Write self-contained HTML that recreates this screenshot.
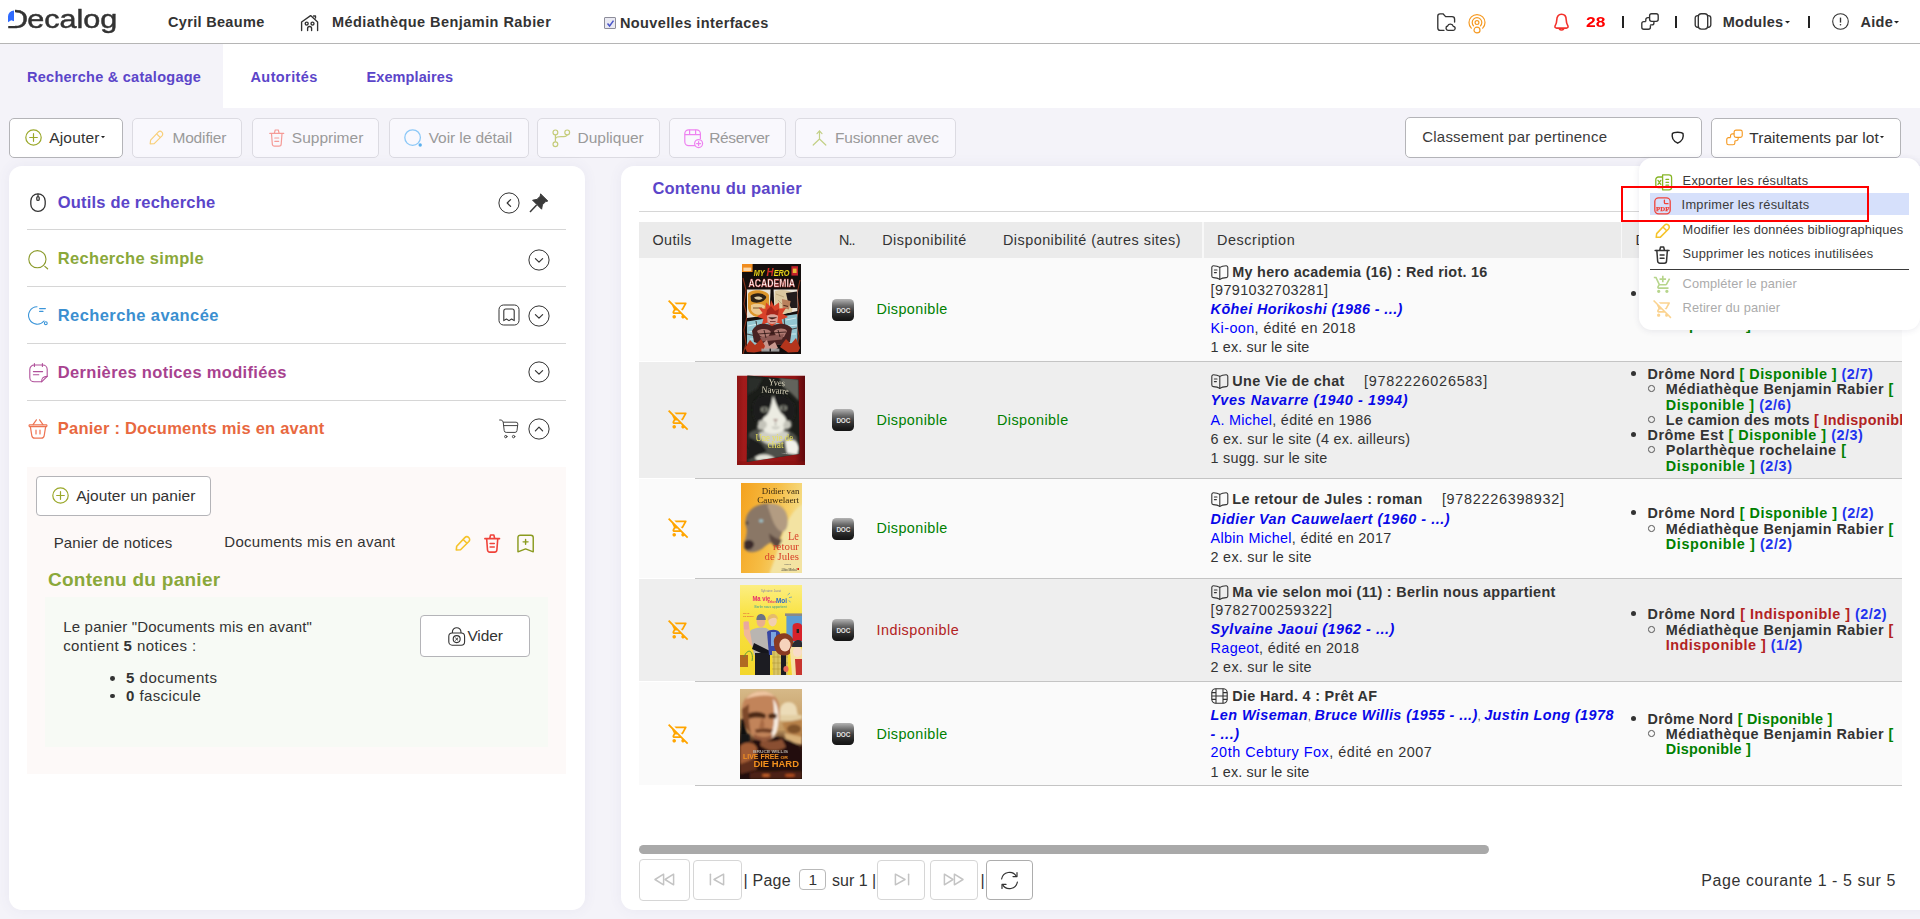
<!DOCTYPE html>
<html lang="fr">
<head>
<meta charset="utf-8">
<title>Decalog</title>
<style>
*{box-sizing:border-box;margin:0;padding:0}
html,body{width:1920px;height:919px;overflow:hidden}
body{font-family:"Liberation Sans",sans-serif;font-size:15px;color:#333;background:#f4f3f9;position:relative}
.abs{position:absolute}
.t{position:absolute;white-space:nowrap;line-height:1}
svg{display:block;overflow:visible}
/* header */
#hdr{left:0;top:0;width:1920px;height:44px;background:#fff;border-bottom:1px solid #b5b5b5}
#tabs{left:0;top:44px;width:1920px;height:64px;background:#fff}
#tab1{left:0;top:44px;width:223px;height:64px;background:#f4f3f9}
.btn{position:absolute;top:118px;height:39px;border:1px solid #b9b9b9;border-radius:4px;background:#fff}
.btn.dis{border-color:#d9d8de;background:#f8f7fc}
/* panels */
#left{left:9px;top:166px;width:576px;height:744px;background:#fff;border-radius:13px;box-shadow:0 0 14px rgba(80,80,140,.07)}
#right{left:621px;top:166px;width:1320px;height:744px;background:#fff;border-radius:13px;box-shadow:0 0 14px rgba(80,80,140,.07)}
.hr{position:absolute;height:1px;background:#d4d4d4}
</style>
</head>
<body>
<div id="hdr" class="abs"></div>
<div id="tabs" class="abs"></div>
<div id="tab1" class="abs"></div>
<!--HEADER-->
<span class="t" style="left:6.2px;top:7.0px;font-size:25.5px;color:#333;transform:scaleX(1.2);transform-origin:0 50%;-webkit-text-stroke:.45px #333;"><span style="letter-spacing:-.8px">D</span>ecalog</span>
<div class="abs" style="left:6.0px;top:8.0px;width:8.6px;height:17.7px;background:#fff"></div>
<svg class="abs" style="left:7.0px;top:9.0px;" width="22" height="22" viewBox="0 0 22 22"><path d="M7 1.4 A6 6 0 0 0 1 7.4 V13.2 L4.2 11.2 L7 12.2 Z" fill="#2f6bff"/></svg>
<span class="t" style="left:168.0px;top:15.0px;font-size:14.5px;letter-spacing:0.32px;font-weight:bold;color:#333;">Cyril Beaume</span>
<svg class="abs" style="left:300.0px;top:14.0px;" width="19" height="17" viewBox="0 0 19 17"><g fill="none" stroke="#333" stroke-width="1.35" stroke-linejoin="round" stroke-linecap="round"><path d="M1.6 16.5 V8 L10.6 1.6 L17.6 8 V16.5"/><path d="M13.5 2 h2 v2"/><circle cx="6.7" cy="9.6" r="1.5"/><circle cx="12.5" cy="9.6" r="1.5"/><path d="M7.6 16.5 v-2 a2 2 0 0 1 4 0 v2"/></g></svg>
<span class="t" style="left:332.0px;top:15.0px;font-size:14.5px;letter-spacing:0.45px;font-weight:bold;color:#333;">Médiathèque Benjamin Rabier</span>
<div class="abs" style="left:604.2px;top:17.3px;width:11.7px;height:11.5px;background:#e9e9f2;border:1px solid #8d8d9a;border-radius:1px"></div>
<svg class="abs" style="left:605.5px;top:18.5px;" width="9" height="9" viewBox="0 0 9 9"><path d="M1.5 4.5 L3.6 7 L7.5 1.6" fill="none" stroke="#4a55c9" stroke-width="1.5"/></svg>
<span class="t" style="left:620.0px;top:16.0px;font-size:14.5px;letter-spacing:0.38px;font-weight:bold;color:#333;">Nouvelles interfaces</span>
<svg class="abs" style="left:1436.5px;top:13.0px;" width="19" height="18" viewBox="0 0 19 18"><g fill="none" stroke="#333" stroke-width="1.35" stroke-linecap="round" stroke-linejoin="round"><path d="M7 17.3 H3.2 A2.4 2.4 0 0 1 .8 14.9 V3 A2.2 2.2 0 0 1 3 .8 H6 L8.6 3.6 H15 A2.6 2.6 0 0 1 17.6 6.2 V9"/><path d="M11 17.3 a2.2 2.2 0 0 1 -.4 -4.3 a3 3 0 0 1 5.7 .3 a2 2 0 0 1 -.3 4 Z"/></g></svg>
<svg class="abs" style="left:1467.5px;top:13.5px;" width="18" height="20" viewBox="0 0 18 20"><g fill="none" stroke="#f59a23" stroke-width="1.2" stroke-linecap="round"><path d="M3.3 14.2 A8 8 0 1 1 14.7 14.2"/><path d="M5.6 11.9 A4.8 4.8 0 1 1 12.4 11.9"/><circle cx="9" cy="8.6" r="1.9"/><path d="M6 16.2 a3 3 0 0 1 6 0 a3 2.6 0 0 1 -6 0 Z"/></g></svg>
<svg class="abs" style="left:1554.0px;top:12.5px;" width="15" height="18.5" viewBox="0 0 15 18.5"><g fill="none" stroke="#f3322c" stroke-width="1.6" stroke-linecap="round" stroke-linejoin="round"><path d="M7.5 1.2 C4.2 1.2 2.8 4 2.8 6.8 C2.8 10 1.9 11.6 1 13.2 C.7 14.3 1.5 15.1 2.6 15.1 H12.4 C13.5 15.1 14.3 14.3 14 13.2 C13.1 11.6 12.2 10 12.2 6.8 C12.2 4 10.8 1.2 7.5 1.2 Z"/><path d="M5.4 16 a2.4 2 0 0 0 4.2 0"/></g></svg>
<span class="t" style="left:1585.9px;top:15.0px;font-size:14.5px;font-weight:bold;color:#f00;transform:scaleX(1.2);transform-origin:0 50%;">28</span>
<div class="abs" style="left:1622.1px;top:15.5px;width:1.6px;height:12.5px;background:#222"></div>
<div class="abs" style="left:1675.3px;top:15.5px;width:1.6px;height:12.5px;background:#222"></div>
<div class="abs" style="left:1808.4px;top:15.5px;width:1.6px;height:12.5px;background:#222"></div>
<svg class="abs" style="left:1641.0px;top:13.0px;" width="18" height="17" viewBox="0 0 18 17"><g fill="none" stroke="#333" stroke-width="1.35" stroke-linejoin="round"><rect x="8.6" y=".7" width="8.6" height="7.6" rx="2"/><path d="M8.6 4.6 H6.8 a2 2 0 0 0 -2 2 V8.4 M12.9 8.3 v1.6 a2 2 0 0 1 -2 2 H9.2"/><path d="M4.8 8.6 H2.8 a2 2 0 0 0 -2 2 v3.6 a2 2 0 0 0 2 2 h4.6 a2 2 0 0 0 2 -2 v-2"/></g></svg>
<svg class="abs" style="left:1694.0px;top:13.0px;" width="18" height="17" viewBox="0 0 18 17"><g fill="none" stroke="#333" stroke-width="1.35"><rect x="4.3" y=".7" width="9.4" height="15.4" rx="3"/><path d="M4.3 2.6 H3.6 a2.4 2.4 0 0 0 -2.4 2.4 v6.8 a2.4 2.4 0 0 0 2.4 2.4 h.7 M13.7 2.6 h.7 a2.4 2.4 0 0 1 2.4 2.4 v6.8 a2.4 2.4 0 0 1 -2.4 2.4 h-.7"/></g></svg>
<span class="t" style="left:1722.7px;top:15.0px;font-size:14.5px;letter-spacing:0.26px;font-weight:bold;color:#333;">Modules</span>
<svg class="abs" style="left:1785.0px;top:20.6px;" width="5" height="3" viewBox="0 0 5 3"><path d="M0 0 H5 L2.5 2.6 Z" fill="#222"/></svg>
<svg class="abs" style="left:1832.0px;top:13.0px;" width="17" height="17" viewBox="0 0 17 17"><circle cx="8.5" cy="8.5" r="7.8" fill="none" stroke="#333" stroke-width="1.1"/><path d="M8.5 4.6 V9.6" stroke="#333" stroke-width="1.35"/><circle cx="8.5" cy="11.8" r=".8" fill="#333"/></svg>
<span class="t" style="left:1860.5px;top:15.0px;font-size:14.5px;letter-spacing:0.28px;font-weight:bold;color:#333;">Aide</span>
<svg class="abs" style="left:1894.0px;top:20.6px;" width="5" height="3" viewBox="0 0 5 3"><path d="M0 0 H5 L2.5 2.6 Z" fill="#222"/></svg>
<span class="t" style="left:27.0px;top:70.0px;font-size:14.5px;letter-spacing:0.26px;font-weight:bold;color:#5b45c9;">Recherche &amp; catalogage</span>
<span class="t" style="left:250.5px;top:70.0px;font-size:14.5px;letter-spacing:0.4px;font-weight:bold;color:#5b45c9;">Autorités</span>
<span class="t" style="left:366.5px;top:70.0px;font-size:14.5px;letter-spacing:0.1px;font-weight:bold;color:#5b45c9;">Exemplaires</span>

<!--TOOLBAR-->
<div class="abs" style="left:9.2px;top:118.0px;width:114.3px;height:40.0px;border:1px solid #b4b4b8;border-radius:5px;background:#fff;"></div>
<svg class="abs" style="left:24.8px;top:129.3px;" width="17" height="17" viewBox="0 0 17 17"><circle cx="8.5" cy="8.5" r="7.7" fill="none" stroke="#9aa82a" stroke-width="1.2"/><path d="M8.5 4.7 V12.3 M4.7 8.5 H12.3" stroke="#9aa82a" stroke-width="1.2" stroke-linecap="round"/></svg>
<span class="t" style="left:49.2px;top:130.0px;font-size:15.5px;letter-spacing:0.18px;color:#333;">Ajouter</span>
<svg class="abs" style="left:101.2px;top:136.3px;" width="4" height="2.4" viewBox="0 0 5 3"><path d="M0 0 H5 L2.5 2.8 Z" fill="#222"/></svg>
<div class="abs" style="left:132.0px;top:118.0px;width:110.3px;height:40.0px;border:1px solid #dcdbe2;border-radius:5px;background:#f9f8fd;"></div>
<svg class="abs" style="left:149.3px;top:130.0px;" width="15" height="15" viewBox="0 0 15 15"><g fill="none" stroke="#f8cf7a" stroke-width="1.2" stroke-linejoin="round"><path d="M1.2 13.8 L1.6 10.2 L9.2 2.2 A2.6 2.6 0 0 1 13 5.8 L5.2 13.6 Z"/><path d="M7.6 3.9 L11.3 7.5"/></g></svg>
<span class="t" style="left:172.4px;top:130.0px;font-size:15.5px;letter-spacing:-0.15px;color:#9a9a9a;">Modifier</span>
<div class="abs" style="left:252.0px;top:118.0px;width:127.3px;height:40.0px;border:1px solid #dcdbe2;border-radius:5px;background:#f9f8fd;"></div>
<svg class="abs" style="left:268.5px;top:128.5px;" width="15.5" height="18" viewBox="0 0 15.5 18"><g fill="none" stroke="#f59b97" stroke-width="1.2" stroke-linecap="round" stroke-linejoin="round"><path d="M.8 4.4 H14.7 M5.4 4.2 L6.2 1 H9.3 L10.1 4.2"/><path d="M2.5 4.6 L3.3 15 A2.2 2.2 0 0 0 5.5 17.2 H10 A2.2 2.2 0 0 0 12.2 15 L13 4.6"/><path d="M5.8 9 H9.7 M5.8 12.3 H9.7"/></g></svg>
<span class="t" style="left:291.8px;top:130.0px;font-size:15.5px;color:#9a9a9a;">Supprimer</span>
<div class="abs" style="left:389.0px;top:118.0px;width:139.5px;height:40.0px;border:1px solid #dcdbe2;border-radius:5px;background:#f9f8fd;"></div>
<svg class="abs" style="left:403.5px;top:128.5px;" width="19" height="19" viewBox="0 0 19 19"><circle cx="8.6" cy="8.6" r="7.8" fill="none" stroke="#8cc8f7" stroke-width="1.3"/><circle cx="16.2" cy="16" r="1.7" fill="#5ab0ee"/></svg>
<span class="t" style="left:428.7px;top:130.0px;font-size:15.5px;letter-spacing:-0.08px;color:#9a9a9a;">Voir le détail</span>
<div class="abs" style="left:537.2px;top:118.0px;width:122.6px;height:40.0px;border:1px solid #dcdbe2;border-radius:5px;background:#f9f8fd;"></div>
<svg class="abs" style="left:552.3px;top:128.6px;" width="19" height="19" viewBox="0 0 19 19"><g fill="none" stroke="#c5cc7a" stroke-width="1.2"><circle cx="3.4" cy="3.4" r="2.4"/><circle cx="3.4" cy="15.2" r="2.4"/><circle cx="15.2" cy="3.4" r="2.4"/><path d="M3.4 5.8 V12.8 M3.4 10.6 C3.4 7.8 6 7.6 9 7.6 C12.6 7.6 15.2 7.4 15.2 5.8"/></g></svg>
<span class="t" style="left:577.5px;top:130.0px;font-size:15.5px;letter-spacing:-0.01px;color:#9a9a9a;">Dupliquer</span>
<div class="abs" style="left:669.2px;top:118.0px;width:116.4px;height:40.0px;border:1px solid #dcdbe2;border-radius:5px;background:#f9f8fd;"></div>
<svg class="abs" style="left:683.6px;top:128.8px;" width="19.5" height="19.5" viewBox="0 0 19.5 19.5"><g fill="none" stroke="#ee82f0" stroke-width="1.2" stroke-linejoin="round"><path d="M12 16.6 H4.6 A3.8 3.8 0 0 1 .8 12.8 V4.6 A3.8 3.8 0 0 1 4.6 .8 H12.6 A3.8 3.8 0 0 1 16.4 4.6 V10"/><path d="M.8 5.6 H16.4 M5.6 .8 V5.6 M11.6 .8 V5.6"/><circle cx="14.6" cy="14.6" r="4" fill="#f9f8fd"/><path d="M14.6 12.6 V16.6 M12.6 14.6 H16.6" stroke-linecap="round"/></g></svg>
<span class="t" style="left:709.2px;top:130.0px;font-size:15.5px;letter-spacing:-0.34px;color:#9a9a9a;">Réserver</span>
<div class="abs" style="left:795.2px;top:118.0px;width:160.4px;height:40.0px;border:1px solid #dcdbe2;border-radius:5px;background:#f9f8fd;"></div>
<svg class="abs" style="left:811.8px;top:129.5px;" width="15" height="16" viewBox="0 0 15 16"><g fill="none" stroke="#c3d086" stroke-width="1.2" stroke-linecap="round" stroke-linejoin="round"><path d="M7.5 1.2 V9 L1.2 15 M7.5 9 L13.8 15"/><path d="M5 3.6 L7.5 1 L10 3.6"/></g></svg>
<span class="t" style="left:835.0px;top:130.0px;font-size:15.5px;letter-spacing:-0.16px;color:#9a9a9a;">Fusionner avec</span>
<div class="abs" style="left:1405.0px;top:117.0px;width:297.0px;height:41.0px;border:1px solid #b4b4b8;border-radius:5px;background:#fff"></div>
<span class="t" style="left:1422.2px;top:129.0px;font-size:15px;letter-spacing:0.23px;color:#3a3a3a;">Classement par pertinence</span>
<svg class="abs" style="left:1670.8px;top:131.3px;" width="13.4" height="13" viewBox="0 0 13.4 13"><path d="M6.7 1.2 C4.4 1.2 2.2 1.5 1.4 2.5 C.5 6 2.2 10 6.7 12.2 C11.2 10 12.9 6 12 2.5 C11.2 1.5 9 1.2 6.7 1.2 Z" fill="none" stroke="#222" stroke-width="1.4" stroke-linejoin="round"/></svg>
<div class="abs" style="left:1710.8px;top:118.0px;width:190.0px;height:40.0px;border:1px solid #b4b4b8;border-radius:5px;background:#fff;"></div>
<svg class="abs" style="left:1725.6px;top:128.6px;" width="17" height="17" viewBox="0 0 18 17"><g fill="none" stroke="#f59a23" stroke-width="1.2" stroke-linejoin="round"><rect x="8.6" y=".7" width="8.6" height="7.6" rx="2"/><path d="M8.6 4.6 H6.8 a2 2 0 0 0 -2 2 V8.4 M12.9 8.3 v1.6 a2 2 0 0 1 -2 2 H9.2"/><path d="M4.8 8.6 H2.8 a2 2 0 0 0 -2 2 v3.6 a2 2 0 0 0 2 2 h4.6 a2 2 0 0 0 2 -2 v-2"/></g></svg>
<span class="t" style="left:1749.3px;top:130.0px;font-size:15.5px;letter-spacing:0.05px;color:#333;">Traitements par lot</span>
<svg class="abs" style="left:1880.3px;top:136.3px;" width="4" height="2.4" viewBox="0 0 5 3"><path d="M0 0 H5 L2.5 2.8 Z" fill="#222"/></svg>

<div id="left" class="abs"></div>
<div id="right" class="abs"></div>
<!--LEFT-->
<div class="abs" style="left:27.0px;top:229.0px;width:539.0px;height:1.0px;background:#d6d6d6"></div>
<div class="abs" style="left:27.0px;top:286.0px;width:539.0px;height:1.0px;background:#d6d6d6"></div>
<div class="abs" style="left:27.0px;top:343.0px;width:539.0px;height:1.0px;background:#d6d6d6"></div>
<div class="abs" style="left:27.0px;top:400.0px;width:539.0px;height:1.0px;background:#d6d6d6"></div>
<svg class="abs" style="left:30.0px;top:192.6px;" width="16" height="19.2" viewBox="0 0 16 19.2"><g fill="none" stroke="#333" stroke-width="1.3"><rect x=".8" y=".8" width="14.4" height="17.6" rx="7.2"/><rect x="6.8" y="3.6" width="2.4" height="3.8" rx="1.2"/><path d="M8 .8 V3.6"/></g></svg>
<span class="t" style="left:57.8px;top:194.0px;font-size:16.5px;letter-spacing:0.18px;font-weight:bold;color:#5b45c9;">Outils de recherche</span>
<svg class="abs" style="left:497.5px;top:192.0px;" width="22" height="22" viewBox="-11 -11 22 22"><circle r="10.1" fill="none" stroke="#333" stroke-width="1"/><path d="M1.6 -3.4 L-1.8 0 L1.6 3.4" fill="none" stroke="#333" stroke-width="1.2" stroke-linecap="round" stroke-linejoin="round"/></svg>
<svg class="abs" style="left:528.5px;top:192.6px;" width="19.5" height="20" viewBox="0 0 19.5 20"><g fill="#3a3a3a" stroke="#3a3a3a" stroke-linejoin="round"><path d="M11.6 .9 L18.8 8 L16.6 8.6 L13.4 11.8 L12.6 16.2 L3.6 7.2 L8 6.4 L11.2 3.2 Z" stroke-width="1"/><path d="M7.6 12 L1 19" stroke-width="1.5" fill="none"/></g></svg>
<svg class="abs" style="left:28.0px;top:249.5px;" width="21" height="20" viewBox="0 0 21 20"><circle cx="9.4" cy="9.2" r="8.6" fill="none" stroke="#8a9a2a" stroke-width="1.1"/><path d="M16.8 16.4 L19.6 18.8" stroke="#8a9a2a" stroke-width="1.2" stroke-linecap="round"/></svg>
<span class="t" style="left:57.8px;top:250.0px;font-size:16.5px;letter-spacing:0.31px;font-weight:bold;color:#8aa83a;">Recherche simple</span>
<svg class="abs" style="left:528.2px;top:248.8px;" width="22" height="22" viewBox="-11 -11 22 22"><circle r="10.1" fill="none" stroke="#333" stroke-width="1"/><path d="M-3.6 -1.4 L0 2.2 L3.6 -1.4" fill="none" stroke="#333" stroke-width="1.2" stroke-linecap="round" stroke-linejoin="round"/></svg>
<svg class="abs" style="left:28.0px;top:306.0px;" width="21" height="20" viewBox="0 0 21 20"><g fill="none" stroke="#3b95d9" stroke-width="1.1" stroke-linecap="round"><path d="M9 .8 A8.7 8.7 0 1 0 16 15"/><path d="M11.6 2.6 H17.4 M11.6 5.4 H15"/><circle cx="17.8" cy="17.2" r="1.4"/></g></svg>
<span class="t" style="left:57.8px;top:307.0px;font-size:16.5px;letter-spacing:0.41px;font-weight:bold;color:#3b8fd0;">Recherche avancée</span>
<svg class="abs" style="left:497.5px;top:304.0px;" width="22" height="22" viewBox="-11 -11 22 22"><rect x="-10" y="-10" width="20" height="20" rx="4.5" fill="none" stroke="#333" stroke-width="1"/><path d="M-5.2 5.6 V-4 A2 2 0 0 1 -3.2 -6 H3.2 A2 2 0 0 1 5.2 -4 V5.6 L2.6 4 L0 5.6 L-2.6 4 Z" fill="none" stroke="#333" stroke-width="1.1" stroke-linejoin="round"/></svg>
<svg class="abs" style="left:528.2px;top:304.5px;" width="22" height="22" viewBox="-11 -11 22 22"><circle r="10.1" fill="none" stroke="#333" stroke-width="1"/><path d="M-3.6 -1.4 L0 2.2 L3.6 -1.4" fill="none" stroke="#333" stroke-width="1.2" stroke-linecap="round" stroke-linejoin="round"/></svg>
<svg class="abs" style="left:28.5px;top:362.6px;" width="19" height="19.6" viewBox="0 0 19 19.6"><g fill="none" stroke="#b0509a" stroke-width="1.1" stroke-linecap="round" stroke-linejoin="round"><path d="M12.6 18.8 H5.2 A4.4 4.4 0 0 1 .8 14.4 V6.4 A4.4 4.4 0 0 1 5.2 2 H13.8 A4.4 4.4 0 0 1 18.2 6.4 V13.4 Z"/><path d="M12.6 18.8 C12.6 15.6 13.4 13.6 18.2 13.4"/><path d="M5.4 .6 V3.4 M13.4 .6 V3.4 M4.4 8.6 H13.6 M4.4 11.8 H9.8"/></g></svg>
<span class="t" style="left:57.8px;top:364.0px;font-size:16.5px;letter-spacing:0.33px;font-weight:bold;color:#a8428f;">Dernières notices modifiées</span>
<svg class="abs" style="left:528.2px;top:361.1px;" width="22" height="22" viewBox="-11 -11 22 22"><circle r="10.1" fill="none" stroke="#333" stroke-width="1"/><path d="M-3.6 -1.4 L0 2.2 L3.6 -1.4" fill="none" stroke="#333" stroke-width="1.2" stroke-linecap="round" stroke-linejoin="round"/></svg>
<svg class="abs" style="left:28.0px;top:419.0px;" width="20" height="20" viewBox="0 0 20 20"><g fill="none" stroke="#ee7452" stroke-width="1.2" stroke-linecap="round" stroke-linejoin="round"><path d="M1.6 7.6 H18.4 A1 1 0 0 0 18.4 5.8 H1.6 A1 1 0 0 0 1.6 7.6 Z"/><path d="M2.4 7.8 L3.8 16.6 A3 3 0 0 0 6.8 19.2 H13.2 A3 3 0 0 0 16.2 16.6 L17.6 7.8"/><path d="M5 5.6 L8.4 .8 M15 5.6 L11.6 .8 M8 11.2 V15 M12 11.2 V15"/></g></svg>
<span class="t" style="left:57.8px;top:420.0px;font-size:16.5px;letter-spacing:0.23px;font-weight:bold;color:#e8683f;">Panier : Documents mis en avant</span>
<svg class="abs" style="left:498.6px;top:419.0px;" width="20" height="20" viewBox="0 0 20 20"><g fill="none" stroke="#444" stroke-width="1" stroke-linecap="round" stroke-linejoin="round"><path d="M.6 1 H2.6 L4.2 3 L5.2 11.6 A2 2 0 0 0 7.2 13.4 H16 A2 2 0 0 0 18 11.6 L18.8 5.2 A1.8 1.8 0 0 0 17 3.2 H4.4"/><path d="M4.8 6.6 H18.6"/><circle cx="6.8" cy="17.6" r="1.2"/><circle cx="14.6" cy="17.6" r="1.2"/></g></svg>
<svg class="abs" style="left:528.2px;top:418.1px;" width="22" height="22" viewBox="-11 -11 22 22"><circle r="10.1" fill="none" stroke="#333" stroke-width="1"/><path d="M-3.6 1.8 L0 -1.8 L3.6 1.8" fill="none" stroke="#333" stroke-width="1.2" stroke-linecap="round" stroke-linejoin="round"/></svg>
<div class="abs" style="left:27.0px;top:467.0px;width:539.0px;height:307.0px;background:#fdf9f8"></div>
<div class="abs" style="left:36.2px;top:476.3px;width:174.5px;height:39.3px;border:1px solid #b4b4b8;border-radius:4px;background:#fff"></div>
<svg class="abs" style="left:52.0px;top:487.3px;" width="17" height="17" viewBox="0 0 17 17"><circle cx="8.5" cy="8.5" r="7.7" fill="none" stroke="#9aa82a" stroke-width="1.2"/><path d="M8.5 4.7 V12.3 M4.7 8.5 H12.3" stroke="#9aa82a" stroke-width="1.2" stroke-linecap="round"/></svg>
<span class="t" style="left:76.2px;top:488.0px;font-size:15.5px;letter-spacing:0.07px;color:#333;">Ajouter un panier</span>
<span class="t" style="left:53.7px;top:535.0px;font-size:15px;letter-spacing:0.16px;color:#333;">Panier de notices</span>
<span class="t" style="left:224.3px;top:534.0px;font-size:15px;letter-spacing:0.27px;color:#333;">Documents mis en avant</span>
<svg class="abs" style="left:455.4px;top:535.0px;" width="16" height="16.6" viewBox="0 0 15 15"><g fill="none" stroke="#f5c32a" stroke-width="1.5" stroke-linejoin="round"><path d="M1.2 13.8 L1.6 10.2 L9.2 2.2 A2.6 2.6 0 0 1 13 5.8 L5.2 13.6 Z"/><path d="M7.6 3.9 L11.3 7.5"/></g></svg>
<svg class="abs" style="left:484.4px;top:534.0px;" width="16.4" height="19" viewBox="0 0 15.5 18"><g fill="none" stroke="#f0433a" stroke-width="1.5" stroke-linecap="round" stroke-linejoin="round"><path d="M.8 4.4 H14.7 M5.4 4.2 L6.2 1 H9.3 L10.1 4.2"/><path d="M2.5 4.6 L3.3 15 A2.2 2.2 0 0 0 5.5 17.2 H10 A2.2 2.2 0 0 0 12.2 15 L13 4.6"/><path d="M5.8 9 H9.7 M5.8 12.3 H9.7"/></g></svg>
<svg class="abs" style="left:517.0px;top:533.6px;" width="17.2" height="19.2" viewBox="0 0 18 19.6"><g fill="none" stroke="#8a9a1e" stroke-width="1.5" stroke-linecap="round" stroke-linejoin="round"><path d="M1 18.4 V3.4 A2.4 2.4 0 0 1 3.4 1 H14.6 A2.4 2.4 0 0 1 17 3.4 V18.4 L9 15.4 Z"/><path d="M9 5.4 V10.6 M6.4 8 H11.6"/></g></svg>
<span class="t" style="left:48.0px;top:570.0px;font-size:19px;letter-spacing:0.27px;font-weight:bold;color:#8aa83a;">Contenu du panier</span>
<div class="abs" style="left:45.0px;top:597.0px;width:503.0px;height:149.5px;background:#f7faf5"></div>
<span class="t" style="left:63.2px;top:619.0px;font-size:15px;letter-spacing:0.19px;color:#333;">Le panier "Documents mis en avant"</span>
<span class="t" style="left:63.2px;top:638.0px;font-size:15px;letter-spacing:0.41px;color:#333;">contient <b>5</b> notices :</span>
<div class="abs" style="left:420.2px;top:615.3px;width:109.8px;height:41.6px;border:1px solid #b4b4b8;border-radius:4px;background:#fff"></div>
<svg class="abs" style="left:447.8px;top:626.6px;" width="17.4" height="19" viewBox="0 0 17.4 19"><g fill="none" stroke="#333" stroke-width="1.1" stroke-linejoin="round"><path d="M4.4 6 V5 A4.3 4.3 0 0 1 13 5 V6"/><rect x=".8" y="6" width="15.8" height="12.2" rx="3.4"/><circle cx="8.7" cy="12.1" r="3.5"/><path d="M7.3 10.7 L10.1 13.5 M10.1 10.7 L7.3 13.5" stroke-width="1"/></g></svg>
<span class="t" style="left:467.4px;top:628.0px;font-size:15.5px;letter-spacing:-0.09px;color:#333;">Vider</span>
<div class="abs" style="left:110.2px;top:675.8px;width:4.8px;height:4.8px;background:#333;border-radius:50%"></div>
<div class="abs" style="left:110.2px;top:693.6px;width:4.8px;height:4.8px;background:#333;border-radius:50%"></div>
<span class="t" style="left:126.1px;top:670.0px;font-size:15px;letter-spacing:0.49px;color:#333;"><b>5</b> documents</span>
<span class="t" style="left:126.1px;top:688.0px;font-size:15px;letter-spacing:0.39px;color:#333;"><b>0</b> fascicule</span>

<!--RIGHT-->
<span class="t" style="left:652.4px;top:180.0px;font-size:16.5px;letter-spacing:0.22px;font-weight:bold;color:#5b45c9;">Contenu du panier</span>
<div class="abs" style="left:639.0px;top:211.0px;width:1290.0px;height:1.0px;background:#d6d6d6"></div>
<div class="abs" style="left:0;top:0;width:1902px;height:800px;overflow:hidden">
<div class="abs" style="left:639.0px;top:222.3px;width:1263.0px;height:35.6px;background:#ebebeb"></div>
<div class="abs" style="left:1202.0px;top:222.3px;width:1.6px;height:35.6px;background:#f8f8f8"></div>
<div class="abs" style="left:1620.6px;top:222.3px;width:1.6px;height:35.6px;background:#f8f8f8"></div>
<span class="t" style="left:652.4px;top:233.0px;font-size:14.4px;letter-spacing:0.4px;color:#333;">Outils</span>
<span class="t" style="left:731.1px;top:233.0px;font-size:14.4px;letter-spacing:0.75px;color:#333;">Imagette</span>
<span class="t" style="left:839.0px;top:233.0px;font-size:14.4px;letter-spacing:-0.96px;color:#333;">N..</span>
<span class="t" style="left:882.2px;top:233.0px;font-size:14.4px;letter-spacing:0.54px;color:#333;">Disponibilité</span>
<span class="t" style="left:1003.0px;top:233.0px;font-size:14.4px;letter-spacing:0.47px;color:#333;">Disponibilité (autres sites)</span>
<span class="t" style="left:1217.0px;top:233.0px;font-size:14.4px;letter-spacing:0.57px;color:#333;">Description</span>
<span class="t" style="left:1635.4px;top:233.0px;font-size:14.4px;letter-spacing:0.9px;color:#333;">Disponibilité (réseau)</span>
<div class="abs" style="left:639.0px;top:257.9px;width:1263.0px;height:103.1px;background:#fafafa"></div>
<div class="abs" style="left:695.0px;top:361.0px;width:1207.0px;height:1.0px;background:#c4c4c4"></div>
<div class="abs" style="left:639.0px;top:362.0px;width:1263.0px;height:116.0px;background:#eee"></div>
<div class="abs" style="left:695.0px;top:478.0px;width:1207.0px;height:1.0px;background:#c4c4c4"></div>
<div class="abs" style="left:639.0px;top:479.0px;width:1263.0px;height:99.0px;background:#fafafa"></div>
<div class="abs" style="left:695.0px;top:578.0px;width:1207.0px;height:1.0px;background:#c4c4c4"></div>
<div class="abs" style="left:639.0px;top:579.0px;width:1263.0px;height:102.3px;background:#eee"></div>
<div class="abs" style="left:695.0px;top:681.3px;width:1207.0px;height:1.0px;background:#c4c4c4"></div>
<div class="abs" style="left:639.0px;top:682.3px;width:1263.0px;height:102.7px;background:#fafafa"></div>
<div class="abs" style="left:695.0px;top:785.0px;width:1207.0px;height:1.0px;background:#c4c4c4"></div>
<svg class="abs" style="left:668.0px;top:298.6px;fill:#ffa500" width="21.3" height="21.3" viewBox="0 0 24 24"><path d="M1.41 1.13L0 2.54l4.39 4.39 2.21 4.66-1.35 2.45c-.16.28-.25.61-.25.96 0 1.1.9 2 2 2h7.46l1.38 1.38c-.5.36-.83.95-.83 1.62 0 1.1.89 2 1.99 2 .67 0 1.26-.33 1.62-.84L21.46 24l1.41-1.41L1.41 1.13zM7 15l1.1-2h2.36l2 2H7zM20 4H7.12l2 2h9.19l-2.76 5h-1.44l1.94 1.94c.54-.14.99-.49 1.25-.97l3.58-6.49C21.25 4.82 20.76 4 20 4zM7 18c-1.1 0-1.99.9-1.99 2S5.9 22 7 22s2-.9 2-2-.9-2-2-2z"/></svg>
<div class="abs" style="left:832.0px;top:298.8px;width:22.0px;height:22.0px;border-radius:4.5px;background:linear-gradient(#b4b4b4,#6a6a6a 30%,#3a3a3a 55%,#1c1c1c 85%,#141414)"></div>
<span class="t" style="left:836.4px;top:308.0px;font-size:6.4px;letter-spacing:-0.17px;font-weight:bold;color:#e4e4e4;">DOC</span>
<span class="t" style="left:876.4px;top:302.0px;font-size:14.4px;letter-spacing:0.41px;color:#008000;">Disponible</span>
<svg class="abs" style="left:668.0px;top:408.8px;fill:#ffa500" width="21.3" height="21.3" viewBox="0 0 24 24"><path d="M1.41 1.13L0 2.54l4.39 4.39 2.21 4.66-1.35 2.45c-.16.28-.25.61-.25.96 0 1.1.9 2 2 2h7.46l1.38 1.38c-.5.36-.83.95-.83 1.62 0 1.1.89 2 1.99 2 .67 0 1.26-.33 1.62-.84L21.46 24l1.41-1.41L1.41 1.13zM7 15l1.1-2h2.36l2 2H7zM20 4H7.12l2 2h9.19l-2.76 5h-1.44l1.94 1.94c.54-.14.99-.49 1.25-.97l3.58-6.49C21.25 4.82 20.76 4 20 4zM7 18c-1.1 0-1.99.9-1.99 2S5.9 22 7 22s2-.9 2-2-.9-2-2-2z"/></svg>
<div class="abs" style="left:832.0px;top:409.0px;width:22.0px;height:22.0px;border-radius:4.5px;background:linear-gradient(#b4b4b4,#6a6a6a 30%,#3a3a3a 55%,#1c1c1c 85%,#141414)"></div>
<span class="t" style="left:836.4px;top:418.0px;font-size:6.4px;letter-spacing:-0.17px;font-weight:bold;color:#e4e4e4;">DOC</span>
<span class="t" style="left:876.4px;top:413.0px;font-size:14.4px;letter-spacing:0.41px;color:#008000;">Disponible</span>
<svg class="abs" style="left:668.0px;top:517.4px;fill:#ffa500" width="21.3" height="21.3" viewBox="0 0 24 24"><path d="M1.41 1.13L0 2.54l4.39 4.39 2.21 4.66-1.35 2.45c-.16.28-.25.61-.25.96 0 1.1.9 2 2 2h7.46l1.38 1.38c-.5.36-.83.95-.83 1.62 0 1.1.89 2 1.99 2 .67 0 1.26-.33 1.62-.84L21.46 24l1.41-1.41L1.41 1.13zM7 15l1.1-2h2.36l2 2H7zM20 4H7.12l2 2h9.19l-2.76 5h-1.44l1.94 1.94c.54-.14.99-.49 1.25-.97l3.58-6.49C21.25 4.82 20.76 4 20 4zM7 18c-1.1 0-1.99.9-1.99 2S5.9 22 7 22s2-.9 2-2-.9-2-2-2z"/></svg>
<div class="abs" style="left:832.0px;top:517.6px;width:22.0px;height:22.0px;border-radius:4.5px;background:linear-gradient(#b4b4b4,#6a6a6a 30%,#3a3a3a 55%,#1c1c1c 85%,#141414)"></div>
<span class="t" style="left:836.4px;top:527.0px;font-size:6.4px;letter-spacing:-0.17px;font-weight:bold;color:#e4e4e4;">DOC</span>
<span class="t" style="left:876.4px;top:521.0px;font-size:14.4px;letter-spacing:0.41px;color:#008000;">Disponible</span>
<svg class="abs" style="left:668.0px;top:619.0px;fill:#ffa500" width="21.3" height="21.3" viewBox="0 0 24 24"><path d="M1.41 1.13L0 2.54l4.39 4.39 2.21 4.66-1.35 2.45c-.16.28-.25.61-.25.96 0 1.1.9 2 2 2h7.46l1.38 1.38c-.5.36-.83.95-.83 1.62 0 1.1.89 2 1.99 2 .67 0 1.26-.33 1.62-.84L21.46 24l1.41-1.41L1.41 1.13zM7 15l1.1-2h2.36l2 2H7zM20 4H7.12l2 2h9.19l-2.76 5h-1.44l1.94 1.94c.54-.14.99-.49 1.25-.97l3.58-6.49C21.25 4.82 20.76 4 20 4zM7 18c-1.1 0-1.99.9-1.99 2S5.9 22 7 22s2-.9 2-2-.9-2-2-2z"/></svg>
<div class="abs" style="left:832.0px;top:619.2px;width:22.0px;height:22.0px;border-radius:4.5px;background:linear-gradient(#b4b4b4,#6a6a6a 30%,#3a3a3a 55%,#1c1c1c 85%,#141414)"></div>
<span class="t" style="left:836.4px;top:628.0px;font-size:6.4px;letter-spacing:-0.17px;font-weight:bold;color:#e4e4e4;">DOC</span>
<span class="t" style="left:876.4px;top:623.0px;font-size:14.4px;letter-spacing:0.5px;color:#b22222;">Indisponible</span>
<svg class="abs" style="left:668.0px;top:722.6px;fill:#ffa500" width="21.3" height="21.3" viewBox="0 0 24 24"><path d="M1.41 1.13L0 2.54l4.39 4.39 2.21 4.66-1.35 2.45c-.16.28-.25.61-.25.96 0 1.1.9 2 2 2h7.46l1.38 1.38c-.5.36-.83.95-.83 1.62 0 1.1.89 2 1.99 2 .67 0 1.26-.33 1.62-.84L21.46 24l1.41-1.41L1.41 1.13zM7 15l1.1-2h2.36l2 2H7zM20 4H7.12l2 2h9.19l-2.76 5h-1.44l1.94 1.94c.54-.14.99-.49 1.25-.97l3.58-6.49C21.25 4.82 20.76 4 20 4zM7 18c-1.1 0-1.99.9-1.99 2S5.9 22 7 22s2-.9 2-2-.9-2-2-2z"/></svg>
<div class="abs" style="left:832.0px;top:722.8px;width:22.0px;height:22.0px;border-radius:4.5px;background:linear-gradient(#b4b4b4,#6a6a6a 30%,#3a3a3a 55%,#1c1c1c 85%,#141414)"></div>
<span class="t" style="left:836.4px;top:732.0px;font-size:6.4px;letter-spacing:-0.17px;font-weight:bold;color:#e4e4e4;">DOC</span>
<span class="t" style="left:876.4px;top:727.0px;font-size:14.4px;letter-spacing:0.41px;color:#008000;">Disponible</span>
<span class="t" style="left:997.0px;top:413.0px;font-size:14.4px;letter-spacing:0.44px;color:#008000;">Disponible</span>
<svg class="abs" style="left:742.0px;top:263.8px;" width="59" height="90" viewBox="0 0 59 90"><defs><filter id="b1" x="-20%" y="-20%" width="140%" height="140%"><feGaussianBlur stdDeviation=".55"/></filter><filter id="b1s"><feGaussianBlur stdDeviation=".25"/></filter><clipPath id="k1"><rect width="59" height="90"/></clipPath></defs><g clip-path="url(#k1)"><rect width="59" height="90" fill="#140e0d"/><g filter="url(#b1)"><path d="M1 14 L4 26 L2 40 L5 52 L2 66 L4 80 L1 90 M58 16 L55 30 L57 44 L54 58 L57 72 L55 88" stroke="#a2381a" stroke-width="1.1" fill="none" opacity=".8"/><path d="M5 25.6 H28.6 L27.4 51 L5 54 Z" fill="#e8e2d6"/><path d="M6 30 C8 25 24 25 27 31 L27 50 L20 53 C12 54 7 50 6 44 Z" fill="#dd962c"/><path d="M8.5 32 C12 28 22 28.6 24.4 33 C23 38.6 13 40.4 9 37 Z" fill="#2e2014"/><path d="M12 33.4 C15 32 19 32.4 20.6 34.4 C18 36 14 36.4 12 33.4 Z" fill="#d8c8a0"/><path d="M9 41 C13 39 20 39.4 23 42 L21 50 C16 52 11 50 9 46 Z" fill="#ecc890"/><path d="M11 44 H20" stroke="#5a3a1a" stroke-width=".8"/><path d="M31.6 25.6 H55.4 V47 L32.6 52 Z" fill="#ebe6da"/><path d="M33 27 C40 25 48 26 52 30 L50 48 L36 51 C33 44 32 34 33 27 Z" fill="#dcc9a0"/><path d="M44 29 L55 27.6 V44 L49 44 L46 38 Z" fill="#241c1c"/><path d="M40 35 L48.6 37 L47 45.6 L40.6 44 Z" fill="#b9805c"/><path d="M41.4 41.4 L46 42.4" stroke="#3a1a10" stroke-width=".9"/><path d="M34 30 L42 33 M36 36 L40 40 M35 44 L41 48" stroke="#b09a70" stroke-width=".7"/><path d="M5 57.4 L55.4 50 V79 L5 82.6 Z" fill="#93c6d0"/><path d="M6 62 L16 60 M7 68 L14 67 M44 56 L54 54 M46 62 L55 61 M45 70 L54 70 M8 75 L15 75" stroke="#d6ecef" stroke-width=".9"/><path d="M14 57 L18 80 M42 53 L44 78 M5 70 L14 72 M46 66 L55 64" stroke="#2a1a18" stroke-width="1.2" opacity=".7"/><path d="M29 36 L32 42 L37 38.6 L37.4 44.6 L44 44 L40.4 49.6 L46 53 L39.6 55.4 L41 61 L34.6 58.6 L30 63 L25.6 58.6 L19.6 61.4 L21.4 55 L15 52.6 L20.6 49 L16.6 43.6 L23.4 45 L24 38.6 L28 42 Z" fill="#d9422a"/><path d="M25 46 L29 42 L33 47 L37 45 L36 51 L24 51 Z" fill="#a8281a"/><path d="M25 52 C27 49.6 34 49.6 36 52 L35.4 58 C32 60.6 28 60.6 25.6 58 Z" fill="#d9a49a"/><path d="M26.6 53.6 L30 55 L34.6 53.4 M28 57.6 H33.6" stroke="#5a1c18" stroke-width=".8"/><path d="M10 67 C15 58 24 59 30 62 C36 58.6 46 59 50 64.6 L48 78 C38 82 22 82.6 12 78 Z" fill="#4a2422"/><path d="M15 67 C20 63.6 27 65 29 68 L26 73 C21 74.6 17 72.6 15 67 Z M32 67 C36 63.6 43 64 45 67 L42 73 C37 74.6 33 72 32 67 Z" fill="#b07a72"/><path d="M18 73 L42 70 L40 75.6 L20 77.6 Z" fill="#8e5a54"/><path d="M16 70 L44 68 M22 66 L24 74 M36 66 L38 73" stroke="#2a1210" stroke-width=".8"/><path d="M20 80 L25 76 L27 82 L33 78 L36 84 L30 87 L22 86 Z" fill="#c9988e"/><path d="M3 84 L8 76 L13 81 L19 75 L23 82 L21 87 L12 88.6 L5 88 Z M38 83 L44 75 L49 80 L54 74 L58 84 L56 88 L46 88.6 Z" fill="#b5341e"/></g><rect width="10.6" height="8" fill="#f08c1e"/><rect x="1.4" y="3.6" width="7.8" height="3.4" fill="#fde3bf" opacity=".85"/><rect x="49.4" y="2.2" width="6.6" height="9.4" fill="#c2202a"/><rect x="50.8" y="4.6" width="3.8" height="4.4" fill="#e8b63a"/><g filter="url(#b1s)"><text x="29.6" y="12.2" text-anchor="middle" style="font-family:&quot;Liberation Sans&quot;,sans-serif;font-weight:bold;font-style:italic;font-size:8.6px" fill="#f5e11c" stroke="#6a5a08" stroke-width=".2" textLength="35.6" lengthAdjust="spacingAndGlyphs">MY <tspan fill="#d8242a" font-size="11.5">H</tspan>ERO</text><text x="29.8" y="22.8" text-anchor="middle" style="font-family:&quot;Liberation Sans&quot;,sans-serif;font-weight:bold;font-size:11.6px" fill="#fff" stroke="#c8302a" stroke-width=".4" textLength="46.4" lengthAdjust="spacingAndGlyphs">ACADEMIA</text></g><rect x="19.4" y="84.6" width="18" height="3" fill="#a4a4a4" opacity=".9"/><rect x="27.6" y="84.6" width="1.3" height="3" fill="#140e0d"/></g></svg>
<svg class="abs" style="left:737.0px;top:374.9px;" width="68" height="90" viewBox="0 0 68 90"><defs><filter id="b2" x="-30%" y="-30%" width="160%" height="160%"><feGaussianBlur stdDeviation="1.1"/></filter><filter id="b2s"><feGaussianBlur stdDeviation=".35"/></filter><linearGradient id="g2" x1="0" x2="1"><stop offset="0" stop-color="#8e1414"/><stop offset=".1" stop-color="#a31b1b"/><stop offset=".85" stop-color="#8f1313"/><stop offset="1" stop-color="#5e090d"/></linearGradient><clipPath id="k2"><path d="M10.3 .6 L61.5 4.4 L62.7 79 L9.8 87 Z"/></clipPath></defs><rect width="68" height="90" fill="url(#g2)"/><rect width="68" height=".8" fill="#eadddd"/><rect y="86.4" width="68" height="3.6" fill="#86110f" opacity=".55"/><path d="M10.3 .6 L61.5 4.4 L62.7 79 L9.8 87 Z" fill="#1b1d19"/><g clip-path="url(#k2)"><g filter="url(#b2)"><path d="M42 2 L62 4 L62 26 L54 18 L46 12 Z" fill="#62645c"/><path d="M10 2 L26 3 L20 14 L10 20 Z" fill="#2c2e29"/><path d="M12 58 C20 52 30 52 38 54 C46 52 56 56 60 62 L62 80 L10 87 Z" fill="#4e504a"/><path d="M22 58 C28 54 46 54 52 58 C50 66 42 70 34 70 C26 68 22 64 22 58 Z" fill="#cfcfc5"/><path d="M48 66 C54 62 62 66 62 74 L60 80 L50 78 Z" fill="#f1f1e9"/><path d="M18 82 C24 78 34 79 38 84 L20 86 Z" fill="#e4e4da"/><path d="M12 62 L24 68 L30 76 L18 82 L10 86 Z" fill="#1d1f1b"/><path d="M16 30 C18 20 30 18 36 22 C44 18 56 22 58 32 C60 42 54 50 48 52 L26 52 C18 48 14 40 16 30 Z" fill="#1d1f1b"/><path d="M36 20 C38 26 40 32 44 38 C50 42 52 50 46 56 C40 60 32 60 27 56 C22 50 24 44 30 40 C34 34 35 26 36 20 Z" fill="#ecece2"/><path d="M22 46 C26 44 30 46 30 50 C28 56 22 56 20 52 Z M48 46 C52 44 56 48 54 52 C50 56 46 54 46 50 Z" fill="#c4c4ba"/><ellipse cx="27.4" cy="34.6" rx="3.6" ry="2.8" fill="#8a8c80"/><ellipse cx="46.4" cy="33" rx="3.6" ry="2.8" fill="#8a8c80"/><ellipse cx="27.4" cy="34.6" rx="1.2" ry="2.2" fill="#222"/><ellipse cx="46.4" cy="33" rx="1.2" ry="2.2" fill="#222"/><path d="M36 44 L41 44 L38.6 47.6 Z" fill="#a8908a"/><path d="M38.6 47.6 V51 M35 52 C37 53.6 40 53.6 42.4 52" stroke="#77776e" stroke-width=".7" fill="none"/></g></g><g filter="url(#b2s)" style="font-family:&quot;Liberation Serif&quot;,serif" text-anchor="middle"><text x="39.6" y="10.6" font-size="9.4" fill="#ddd7be" textLength="16.6" lengthAdjust="spacingAndGlyphs" transform="rotate(4 39 10)">Yves</text><text x="38" y="18.4" font-size="9.4" fill="#ddd7be" textLength="27.4" lengthAdjust="spacingAndGlyphs" transform="rotate(4 38 18)">Navarre</text><text x="37.2" y="65.6" font-size="9.6" fill="#e8e05a" textLength="37.6" lengthAdjust="spacingAndGlyphs">Une vie de</text><text x="38.6" y="73.4" font-size="9.6" fill="#e8e05a" textLength="16" lengthAdjust="spacingAndGlyphs">chat</text><text x="51" y="79" font-size="2.6" fill="#c9c9c0">Albin Michel</text></g></svg>
<svg class="abs" style="left:741.0px;top:482.9px;" width="61" height="90" viewBox="0 0 61 90"><defs><filter id="b3" x="-30%" y="-30%" width="160%" height="160%"><feGaussianBlur stdDeviation=".8"/></filter><filter id="b3s"><feGaussianBlur stdDeviation=".3"/></filter><linearGradient id="g3" x1="0" y1="0" x2="1" y2=".3"><stop offset="0" stop-color="#f4a21f"/><stop offset=".55" stop-color="#f6bd45"/><stop offset="1" stop-color="#f5dc85"/></linearGradient><clipPath id="k3"><rect width="61" height="90"/></clipPath></defs><g clip-path="url(#k3)"><rect width="61" height="90" fill="url(#g3)"/><g filter="url(#b3)" transform="translate(-2 -6) scale(1.08)"><path d="M61 24 C48 30 42 46 38 62 C34 74 30 84 28 90 H61 Z" fill="#f3e3a2"/><path d="M8 34 C14 24 30 22 38 28 C44 36 42 52 36 60 C30 60 26 62 22 66 C16 70 8 72 5 66 C4 60 8 54 7 48 C5 42 6 38 8 34 Z" fill="#8a7766"/><path d="M26 26 C34 22 44 28 45 38 C46 48 42 52 38 50 C32 46 30 36 26 26 Z" fill="#b39c82"/><path d="M5 60 C8 57 13 58 14 62 C13 67 8 69 5 66 Z" fill="#3a2c2c"/><ellipse cx="20.5" cy="40.6" rx="2" ry="1.5" fill="#9fc4cc"/><ellipse cx="7.5" cy="42.5" rx="1.2" ry="1.8" fill="#4a3e3a"/><path d="M28 52 C32 56 36 58 40 58 L36 66 C32 64 28 60 28 52 Z" fill="#5c4a40"/></g><g filter="url(#b3s)" style="font-family:&quot;Liberation Serif&quot;,serif" text-anchor="end"><text x="58.4" y="11.4" font-size="9.2" fill="#3b2a10" textLength="37.6" lengthAdjust="spacingAndGlyphs">Didier van</text><text x="58.2" y="20.2" font-size="9.2" fill="#3b2a10" textLength="42" lengthAdjust="spacingAndGlyphs">Cauwelaert</text><text x="58" y="57.4" font-size="12.6" fill="#d8422a" textLength="11" lengthAdjust="spacingAndGlyphs">Le</text><text x="58" y="66.6" font-size="10" fill="#d8422a" textLength="26" lengthAdjust="spacingAndGlyphs">retour</text><text x="58" y="77.4" font-size="10.4" fill="#d8422a" textLength="34.4" lengthAdjust="spacingAndGlyphs">de Jules</text><text x="50" y="82.4" font-size="2.6" fill="#555">roman</text><text x="56" y="87.6" font-size="3" fill="#333">Albin Michel</text></g><rect x="56.4" y="85" width="1.6" height="2" fill="#d8201a"/></g></svg>
<svg class="abs" style="left:740.0px;top:584.9px;" width="62" height="90" viewBox="0 0 62 90"><defs><filter id="b4" x="-30%" y="-30%" width="160%" height="160%"><feGaussianBlur stdDeviation=".7"/></filter><filter id="b4s"><feGaussianBlur stdDeviation=".3"/></filter><linearGradient id="g4" x1="0" y1="0" x2="0" y2="1"><stop offset="0" stop-color="#fcee82"/><stop offset=".35" stop-color="#f9e240"/><stop offset="1" stop-color="#f3d62c"/></linearGradient><clipPath id="k4"><rect width="62" height="90"/></clipPath></defs><g clip-path="url(#k4)"><rect width="62" height="90" fill="url(#g4)"/><g filter="url(#b4)"><rect x="45" y="28.4" width="17" height="2.6" fill="#8a8a88"/><rect x="46.4" y="31" width="15.6" height="26" fill="#5b9bd3"/><path d="M52.6 41 C52.6 37 62 37 62 41 V56 H52.6 Z" fill="#d8212c"/><rect x="56.6" y="44" width="2.4" height="4" fill="#222"/><rect x="0" y="70" width="8" height="12" fill="#b06a22"/><path d="M4 72 C8 62 14 66 12 76" fill="none" stroke="#5a9a3a" stroke-width="1"/><path d="M3.4 37 L8.6 36.4 L10 46 L16 58 L12 62 L4 50 Z" fill="#f0b898"/><rect x="3.8" y="36.4" width="5" height="8" rx="1" fill="#e8a8a0"/><path d="M10 46 C14 42 26 41 29 45 L30 68 L14 70 L12 58 Z" fill="#b9b5b1"/><path d="M14 58 L30 66 L30 72 L12 64 Z" fill="#18181c"/><rect x="15" y="68" width="15" height="22" fill="#1b1b22"/><ellipse cx="21" cy="36.6" rx="4.4" ry="5.4" fill="#e9b08e"/><path d="M16.4 35 C16 27 26 27 25.8 35 Z" fill="#6c7384"/><path d="M27 47 C30 44 38 44 40 48 L40 70 H29 Z" fill="#3947a3"/><rect x="31" y="47" width="5" height="14" fill="#7aa5e0"/><ellipse cx="32.6" cy="36" rx="4.2" ry="5.4" fill="#f2cfb0"/><path d="M27.6 36 C26 28 38 26 38 35 C36 32 32 32 27.6 36 Z" fill="#e6bc6a"/><path d="M32 66 H48 V90 H33 Z" fill="#d9c463"/><path d="M34 66 V90 M38 66 V90 M42 66 V90 M46 66 V90 M32 72 H48 M32 78 H48 M32 84 H48" stroke="#a89030" stroke-width=".5"/><path d="M41 70 H46 V90 H41 Z" fill="#1d1d24"/><path d="M34 58 C32 48 48 44 53 54 C54 62 52 68 48 70 C40 72 34 68 34 58 Z" fill="#8a3a22"/><ellipse cx="45" cy="60" rx="5.6" ry="6.4" fill="#f6d3bc"/><path d="M50 66 C50 58 62 58 62 66 V90 H52 Z" fill="#f6e2a4"/><ellipse cx="57.4" cy="67" rx="4.4" ry="5" fill="#f8dcc8"/><path d="M52 62 C52 54 62 53 62 58 V62 Z" fill="#2b2b33"/><path d="M55 74 H62 V90 H56 Z" fill="#c8342e"/><ellipse cx="46" cy="84" rx="2.6" ry="3" fill="#e86a5a"/></g><g filter="url(#b4s)" style="font-family:&quot;Liberation Sans&quot;,sans-serif;font-weight:bold"><text x="12.4" y="15.6" font-size="6.6" fill="#e8306c" textLength="18" lengthAdjust="spacingAndGlyphs">Ma vie</text><text x="27.6" y="17.6" font-size="3.4" fill="#e8306c">selon</text><text x="36" y="17.6" font-size="7.6" fill="#2d68cc" textLength="11" lengthAdjust="spacingAndGlyphs">Moi</text><text x="21" y="6.6" font-size="2.8" fill="#7a7ab0" font-weight="normal" textLength="20">Sylvaine Jaoui</text><text x="14.6" y="23" font-size="3.2" fill="#2a9a9a" font-weight="normal" textLength="32">Berlin nous appartient</text><text x="3" y="29" font-size="2.4" fill="#d8303a" font-weight="normal">par ici</text><text x="3" y="31.8" font-size="2.4" fill="#d8303a" font-weight="normal">les selfies</text></g><path d="M47.6 10 L50 8 M49 12.6 L52 12 M48.6 15.6 L50.6 17" stroke="#3a8ad8" stroke-width=".6"/></g></svg>
<svg class="abs" style="left:740.0px;top:688.9px;" width="62" height="90" viewBox="0 0 62 90"><defs><filter id="b5" x="-30%" y="-30%" width="160%" height="160%"><feGaussianBlur stdDeviation=".9"/></filter><filter id="b5s"><feGaussianBlur stdDeviation=".3"/></filter><linearGradient id="g5" x1="0" y1="0" x2="0" y2="1"><stop offset="0" stop-color="#d6b988"/><stop offset=".45" stop-color="#c49a62"/><stop offset=".6" stop-color="#3a1c12"/><stop offset="1" stop-color="#100806"/></linearGradient><clipPath id="k5"><rect width="62" height="90"/></clipPath></defs><g clip-path="url(#k5)"><rect width="62" height="90" fill="url(#g5)"/><g filter="url(#b5)"><path d="M40 22 C40 10 57 10 57 22 L59 30 H38 Z" fill="#ecdcb8"/><rect x="37" y="26" width="25" height="6" fill="#e3cfa4"/><path d="M42 34 L62 30 L62 50 L48 48 Z" fill="#b8824a"/><ellipse cx="54" cy="40" rx="7" ry="4.6" fill="#80522c"/><path d="M44 44 L62 48 L62 56 L46 52 Z" fill="#d8b078"/><path d="M14 52 C28 44 46 48 58 56 L62 62 V90 H0 V64 Z" fill="#21100c"/><path d="M22 50 C30 54 38 52 42 50 L46 58 C36 64 26 62 20 56 Z" fill="#8a5030"/><path d="M2 20 C2 -2 36 -4 39 16 C41 30 39 42 33 49 C26 54 16 52 11 45 C4 38 2 30 2 20 Z" fill="#c2845a"/><path d="M6 10 C11 1 28 -1 35 8 C26 5 14 7 6 10 Z" fill="#efc6a2"/><path d="M2 20 C2 30 4 38 11 45 C9 36 8 26 9 15 Z" fill="#7e4a2c"/><path d="M33 10 C39 15 40 32 37 42 C36 46 33 49 30 49 C35 38 35 24 33 10 Z" fill="#f6eade"/><path d="M8 25 C13 22 21 22 26 26 L25 29.6 C19 28 13 28 9 30 Z M28 26 C31 23.6 35 23.6 37 26 L36 29.6 H29 Z" fill="#4e2a18"/><path d="M22 28 C24 32 25 36 24 39 L19 39 C20 35 21 31 22 28 Z" fill="#a86a44"/><path d="M15 40.6 C21 39 28 39 33 40.6 L31 44 C26 43 20 43 16 44 Z" fill="#6e3c24"/><path d="M14 45 C20 49 28 49 33 45 L31 50 C25 53 18 52 14 49 Z" fill="#94583a"/><path d="M1 30 L3.4 30 L8 48 L10 60 H0 V46 Z" fill="#0c0c0c"/><rect x="0" y="45" width="10" height="15" fill="#121212"/><path d="M0 57 C6 51 15 53 17 59 C17 67 11 73 5 75 L0 75 Z" fill="#a25c36"/><path d="M0 75 C6 73 13 71 15 67 L17 81 L0 85 Z" fill="#5e2e1c"/><path d="M10 84 C20 80 30 84 40 82 C50 80 56 84 62 82 V90 H10 Z" fill="#4e2412"/><ellipse cx="26" cy="86.4" rx="4" ry="1.4" fill="#c8642a"/><ellipse cx="50" cy="86.4" rx="5" ry="1.3" fill="#b8501e"/></g><g filter="url(#b5s)" style="font-family:&quot;Liberation Sans&quot;,sans-serif;font-weight:bold"><text x="13" y="64.4" font-size="3.8" fill="#b5b0a8" textLength="35" lengthAdjust="spacingAndGlyphs">BRUCE WILLIS</text><text x="3" y="70.4" font-size="6.8" fill="#f2901f" textLength="36" lengthAdjust="spacingAndGlyphs">LIVE FREE</text><text x="40.4" y="70.2" font-size="3.6" fill="#f2901f" textLength="7.6" lengthAdjust="spacingAndGlyphs">OR</text><text x="13.4" y="78.4" font-size="9.6" fill="#f2901f" textLength="45.6" lengthAdjust="spacingAndGlyphs">DIE HARD</text></g></g></svg>
<svg class="abs" style="left:1210.6px;top:265.1px;" width="17.6" height="15.2" viewBox="0 0 17.6 15.2"><g fill="none" stroke="#333" stroke-width="1.1" stroke-linejoin="round"><path d="M8.8 2.4 C7 1.2 4.6 .8 2.4 .8 A1.6 1.6 0 0 0 .8 2.4 V11 A1.6 1.6 0 0 0 2.4 12.6 C4.8 12.6 7 13 8.8 14.4 C10.6 13 12.8 12.6 15.2 12.6 A1.6 1.6 0 0 0 16.8 11 V2.4 A1.6 1.6 0 0 0 15.2 .8 C13 .8 10.6 1.2 8.8 2.4 Z"/><path d="M8.8 2.4 V14.4 M3.4 5 H6 M3.4 7.6 H5.4" stroke-linecap="round"/></g></svg>
<span class="t" style="left:1232.3px;top:265.0px;font-size:14.4px;letter-spacing:0.27px;font-weight:bold;color:#333;">My hero academia (16) : Red riot. 16</span>
<span class="t" style="left:1210.6px;top:283.0px;font-size:14.4px;letter-spacing:0.39px;color:#333;">[9791032703281]</span>
<span class="t" style="left:1210.6px;top:302.0px;font-size:14.4px;letter-spacing:0.41px;font-weight:bold;font-style:italic;color:#0808e8;">Kōhei Horikoshi (1986 - ...)</span>
<span class="t" style="left:1210.6px;top:321.0px;font-size:14.4px;letter-spacing:0.4px;color:#333;"><span style="color:#0000ff">Ki-oon</span>, édité en 2018</span>
<span class="t" style="left:1210.6px;top:340.0px;font-size:14.4px;letter-spacing:0.12px;color:#333;">1 ex. sur le site</span>
<span class="t" style="left:1647.5px;top:287.0px;font-size:14.4px;letter-spacing:0.27px;font-weight:bold;color:#333;">Drôme Nord <span style="color:#008000">[ Disponible ]</span></span>
<div class="abs" style="left:1630.9px;top:290.8px;width:5.2px;height:5.2px;background:#333;border-radius:50%"></div>
<span class="t" style="left:1665.8px;top:303.0px;font-size:14.4px;letter-spacing:0.47px;font-weight:bold;color:#333;">Médiathèque Benjamin Rabier <span style="color:#008000">[</span></span>
<div class="abs" style="left:1648.4px;top:306.0px;width:6.6px;height:6.6px;border:1.2px solid #555;border-radius:50%"></div>
<span class="t" style="left:1665.8px;top:318.0px;font-size:14.4px;letter-spacing:0.23px;font-weight:bold;color:#333;"><span style="color:#008000">Disponible ]</span></span>
<svg class="abs" style="left:1210.6px;top:374.1px;" width="17.6" height="15.2" viewBox="0 0 17.6 15.2"><g fill="none" stroke="#333" stroke-width="1.1" stroke-linejoin="round"><path d="M8.8 2.4 C7 1.2 4.6 .8 2.4 .8 A1.6 1.6 0 0 0 .8 2.4 V11 A1.6 1.6 0 0 0 2.4 12.6 C4.8 12.6 7 13 8.8 14.4 C10.6 13 12.8 12.6 15.2 12.6 A1.6 1.6 0 0 0 16.8 11 V2.4 A1.6 1.6 0 0 0 15.2 .8 C13 .8 10.6 1.2 8.8 2.4 Z"/><path d="M8.8 2.4 V14.4 M3.4 5 H6 M3.4 7.6 H5.4" stroke-linecap="round"/></g></svg>
<span class="t" style="left:1232.3px;top:374.0px;font-size:14.4px;letter-spacing:0.37px;font-weight:bold;color:#333;">Une Vie de chat</span>
<span class="t" style="left:1363.9px;top:374.0px;font-size:14.4px;letter-spacing:0.8px;color:#333;">[9782226026583]</span>
<span class="t" style="left:1210.6px;top:393.0px;font-size:14.4px;letter-spacing:0.63px;font-weight:bold;font-style:italic;color:#0808e8;">Yves Navarre (1940 - 1994)</span>
<span class="t" style="left:1210.6px;top:413.0px;font-size:14.4px;letter-spacing:0.28px;color:#333;"><span style="color:#0000ff">A. Michel</span>, édité en 1986</span>
<span class="t" style="left:1210.6px;top:432.0px;font-size:14.4px;letter-spacing:0.25px;color:#333;">6 ex. sur le site (4 ex. ailleurs)</span>
<span class="t" style="left:1210.6px;top:451.0px;font-size:14.4px;letter-spacing:0.22px;color:#333;">1 sugg. sur le site</span>
<span class="t" style="left:1647.5px;top:367.0px;font-size:14.4px;letter-spacing:0.45px;font-weight:bold;color:#333;">Drôme Nord <span style="color:#008000">[ Disponible ] </span><span style="color:#2233ee">(2/7)</span></span>
<div class="abs" style="left:1630.9px;top:370.8px;width:5.2px;height:5.2px;background:#333;border-radius:50%"></div>
<span class="t" style="left:1665.8px;top:382.0px;font-size:14.4px;letter-spacing:0.47px;font-weight:bold;color:#333;">Médiathèque Benjamin Rabier <span style="color:#008000">[</span></span>
<div class="abs" style="left:1648.4px;top:385.0px;width:6.6px;height:6.6px;border:1.2px solid #555;border-radius:50%"></div>
<span class="t" style="left:1665.8px;top:398.0px;font-size:14.4px;letter-spacing:0.54px;font-weight:bold;color:#333;"><span style="color:#008000">Disponible ] </span><span style="color:#2233ee">(2/6)</span></span>
<span class="t" style="left:1665.8px;top:413.0px;font-size:14.4px;letter-spacing:0.31px;font-weight:bold;color:#333;">Le camion des mots <span style="color:#b22222">[ Indisponible ]</span></span>
<div class="abs" style="left:1648.4px;top:416.0px;width:6.6px;height:6.6px;border:1.2px solid #555;border-radius:50%"></div>
<span class="t" style="left:1647.5px;top:428.0px;font-size:14.4px;letter-spacing:0.5px;font-weight:bold;color:#333;">Drôme Est <span style="color:#008000">[ Disponible ] </span><span style="color:#2233ee">(2/3)</span></span>
<div class="abs" style="left:1630.9px;top:431.8px;width:5.2px;height:5.2px;background:#333;border-radius:50%"></div>
<span class="t" style="left:1665.8px;top:443.0px;font-size:14.4px;letter-spacing:0.53px;font-weight:bold;color:#333;">Polarthèque rochelaine <span style="color:#008000">[</span></span>
<div class="abs" style="left:1648.4px;top:446.0px;width:6.6px;height:6.6px;border:1.2px solid #555;border-radius:50%"></div>
<span class="t" style="left:1665.8px;top:459.0px;font-size:14.4px;letter-spacing:0.6px;font-weight:bold;color:#333;"><span style="color:#008000">Disponible ] </span><span style="color:#2233ee">(2/3)</span></span>
<svg class="abs" style="left:1210.6px;top:492.1px;" width="17.6" height="15.2" viewBox="0 0 17.6 15.2"><g fill="none" stroke="#333" stroke-width="1.1" stroke-linejoin="round"><path d="M8.8 2.4 C7 1.2 4.6 .8 2.4 .8 A1.6 1.6 0 0 0 .8 2.4 V11 A1.6 1.6 0 0 0 2.4 12.6 C4.8 12.6 7 13 8.8 14.4 C10.6 13 12.8 12.6 15.2 12.6 A1.6 1.6 0 0 0 16.8 11 V2.4 A1.6 1.6 0 0 0 15.2 .8 C13 .8 10.6 1.2 8.8 2.4 Z"/><path d="M8.8 2.4 V14.4 M3.4 5 H6 M3.4 7.6 H5.4" stroke-linecap="round"/></g></svg>
<span class="t" style="left:1232.3px;top:492.0px;font-size:14.4px;letter-spacing:0.37px;font-weight:bold;color:#333;">Le retour de Jules : roman</span>
<span class="t" style="left:1441.9px;top:492.0px;font-size:14.4px;letter-spacing:0.72px;color:#333;">[9782226398932]</span>
<span class="t" style="left:1210.6px;top:512.0px;font-size:14.4px;letter-spacing:0.52px;font-weight:bold;font-style:italic;color:#0808e8;">Didier Van Cauwelaert (1960 - ...)</span>
<span class="t" style="left:1210.6px;top:531.0px;font-size:14.4px;letter-spacing:0.3px;color:#333;"><span style="color:#0000ff">Albin Michel</span>, édité en 2017</span>
<span class="t" style="left:1210.6px;top:550.0px;font-size:14.4px;letter-spacing:0.26px;color:#333;">2 ex. sur le site</span>
<span class="t" style="left:1647.5px;top:506.0px;font-size:14.4px;letter-spacing:0.47px;font-weight:bold;color:#333;">Drôme Nord <span style="color:#008000">[ Disponible ] </span><span style="color:#2233ee">(2/2)</span></span>
<div class="abs" style="left:1630.9px;top:509.8px;width:5.2px;height:5.2px;background:#333;border-radius:50%"></div>
<span class="t" style="left:1665.8px;top:522.0px;font-size:14.4px;letter-spacing:0.47px;font-weight:bold;color:#333;">Médiathèque Benjamin Rabier <span style="color:#008000">[</span></span>
<div class="abs" style="left:1648.4px;top:525.0px;width:6.6px;height:6.6px;border:1.2px solid #555;border-radius:50%"></div>
<span class="t" style="left:1665.8px;top:537.0px;font-size:14.4px;letter-spacing:0.6px;font-weight:bold;color:#333;"><span style="color:#008000">Disponible ] </span><span style="color:#2233ee">(2/2)</span></span>
<svg class="abs" style="left:1210.6px;top:585.1px;" width="17.6" height="15.2" viewBox="0 0 17.6 15.2"><g fill="none" stroke="#333" stroke-width="1.1" stroke-linejoin="round"><path d="M8.8 2.4 C7 1.2 4.6 .8 2.4 .8 A1.6 1.6 0 0 0 .8 2.4 V11 A1.6 1.6 0 0 0 2.4 12.6 C4.8 12.6 7 13 8.8 14.4 C10.6 13 12.8 12.6 15.2 12.6 A1.6 1.6 0 0 0 16.8 11 V2.4 A1.6 1.6 0 0 0 15.2 .8 C13 .8 10.6 1.2 8.8 2.4 Z"/><path d="M8.8 2.4 V14.4 M3.4 5 H6 M3.4 7.6 H5.4" stroke-linecap="round"/></g></svg>
<span class="t" style="left:1232.3px;top:585.0px;font-size:14.4px;letter-spacing:0.3px;font-weight:bold;color:#333;">Ma vie selon moi (11) : Berlin nous appartient</span>
<span class="t" style="left:1210.6px;top:603.0px;font-size:14.4px;letter-spacing:0.67px;color:#333;">[9782700259322]</span>
<span class="t" style="left:1210.6px;top:622.0px;font-size:14.4px;letter-spacing:0.51px;font-weight:bold;font-style:italic;color:#0808e8;">Sylvaine Jaoui (1962 - ...)</span>
<span class="t" style="left:1210.6px;top:641.0px;font-size:14.4px;letter-spacing:0.34px;color:#333;"><span style="color:#0000ff">Rageot</span>, édité en 2018</span>
<span class="t" style="left:1210.6px;top:660.0px;font-size:14.4px;letter-spacing:0.26px;color:#333;">2 ex. sur le site</span>
<span class="t" style="left:1647.5px;top:607.0px;font-size:14.4px;letter-spacing:0.5px;font-weight:bold;color:#333;">Drôme Nord <span style="color:#b22222">[ Indisponible ] </span><span style="color:#2233ee">(2/2)</span></span>
<div class="abs" style="left:1630.9px;top:610.8px;width:5.2px;height:5.2px;background:#333;border-radius:50%"></div>
<span class="t" style="left:1665.8px;top:623.0px;font-size:14.4px;letter-spacing:0.47px;font-weight:bold;color:#333;">Médiathèque Benjamin Rabier <span style="color:#b22222">[</span></span>
<div class="abs" style="left:1648.4px;top:626.0px;width:6.6px;height:6.6px;border:1.2px solid #555;border-radius:50%"></div>
<span class="t" style="left:1665.8px;top:638.0px;font-size:14.4px;letter-spacing:0.49px;font-weight:bold;color:#333;"><span style="color:#b22222">Indisponible ] </span><span style="color:#2233ee">(1/2)</span></span>
<svg class="abs" style="left:1211.0px;top:688.4px;" width="17" height="16" viewBox="0 0 17 16"><g fill="none" stroke="#333" stroke-width="1.1"><rect x=".8" y=".8" width="15.4" height="14.4" rx="4"/><path d="M5 .8 V15.2 M12 .8 V15.2 M.8 8 H16.2 M.8 4.6 H5 M.8 11.4 H5 M12 4.6 H16.2 M12 11.4 H16.2"/></g></svg>
<span class="t" style="left:1232.3px;top:689.0px;font-size:14.4px;letter-spacing:0.31px;font-weight:bold;color:#333;">Die Hard. 4 : Prêt AF</span>
<span class="t" style="left:1210.6px;top:708.0px;font-size:14.4px;letter-spacing:0.43px;font-weight:bold;font-style:italic;color:#0808e8;">Len Wiseman<span style="font-weight:normal;font-style:normal;color:#333;font-size:10px">, </span>Bruce Willis (1955 - ...)<span style="font-weight:normal;font-style:normal;color:#333;font-size:10px">, </span>Justin Long (1978</span>
<span class="t" style="left:1210.6px;top:727.0px;font-size:14.4px;letter-spacing:0.58px;font-weight:bold;font-style:italic;color:#0808e8;">- ...)</span>
<span class="t" style="left:1210.6px;top:745.0px;font-size:14.4px;letter-spacing:0.52px;color:#333;"><span style="color:#0000ff">20th Cebtury Fox</span>, édité en 2007</span>
<span class="t" style="left:1210.6px;top:765.0px;font-size:14.4px;letter-spacing:0.12px;color:#333;">1 ex. sur le site</span>
<span class="t" style="left:1647.5px;top:712.0px;font-size:14.4px;letter-spacing:0.27px;font-weight:bold;color:#333;">Drôme Nord <span style="color:#008000">[ Disponible ]</span></span>
<div class="abs" style="left:1630.9px;top:715.8px;width:5.2px;height:5.2px;background:#333;border-radius:50%"></div>
<span class="t" style="left:1665.8px;top:727.0px;font-size:14.4px;letter-spacing:0.47px;font-weight:bold;color:#333;">Médiathèque Benjamin Rabier <span style="color:#008000">[</span></span>
<div class="abs" style="left:1648.4px;top:730.0px;width:6.6px;height:6.6px;border:1.2px solid #555;border-radius:50%"></div>
<span class="t" style="left:1665.8px;top:742.0px;font-size:14.4px;letter-spacing:0.23px;font-weight:bold;color:#333;"><span style="color:#008000">Disponible ]</span></span>
</div>
<div class="abs" style="left:639.0px;top:845.0px;width:850.0px;height:9.0px;background:#a9a9a9;border-radius:5px"></div>
<div class="abs" style="left:639.0px;top:859.0px;width:50.8px;height:42.0px;border:1px solid #d6d6d6;border-radius:4px;background:#fff"></div>
<div class="abs" style="left:693.2px;top:859.6px;width:48.6px;height:40.6px;border:1px solid #d6d6d6;border-radius:4px;background:#fff"></div>
<div class="abs" style="left:877.4px;top:859.6px;width:48.0px;height:40.6px;border:1px solid #d6d6d6;border-radius:4px;background:#fff"></div>
<div class="abs" style="left:929.6px;top:859.6px;width:48.0px;height:40.6px;border:1px solid #d6d6d6;border-radius:4px;background:#fff"></div>
<div class="abs" style="left:985.6px;top:859.6px;width:47.4px;height:40.6px;border:1px solid #adadad;border-radius:4px;background:#fff"></div>
<svg class="abs" style="left:654.0px;top:873.4px;" width="21" height="13" viewBox="0 0 21 13"><g fill="none" stroke="#c4c4c4" stroke-width="1.5" stroke-linejoin="round" stroke-linecap="round"><path d="M9.6 1.2 V11.8 L1 6.5 Z"/><path d="M19.6 1.2 V11.8 L11 6.5 Z"/></g></svg>
<svg class="abs" style="left:709.4px;top:873.4px;" width="16" height="13" viewBox="0 0 16 13"><g fill="none" stroke="#c4c4c4" stroke-width="1.5" stroke-linejoin="round" stroke-linecap="round"><path d="M14.6 1.2 V11.8 L5 6.5 Z"/><path d="M1.4 1.2 V11.8"/></g></svg>
<svg class="abs" style="left:893.6px;top:873.4px;" width="16" height="13" viewBox="0 0 16 13"><g fill="none" stroke="#c4c4c4" stroke-width="1.5" stroke-linejoin="round" stroke-linecap="round"><path d="M1.4 1.2 V11.8 L11 6.5 Z"/><path d="M14.6 1.2 V11.8"/></g></svg>
<svg class="abs" style="left:943.0px;top:873.4px;" width="21" height="13" viewBox="0 0 21 13"><g fill="none" stroke="#c4c4c4" stroke-width="1.5" stroke-linejoin="round" stroke-linecap="round"><path d="M1.4 1.2 V11.8 L10 6.5 Z"/><path d="M11.4 1.2 V11.8 L20 6.5 Z"/></g></svg>
<svg class="abs" style="left:1000.0px;top:870.6px;" width="19" height="19" viewBox="0 0 19 19"><g fill="none" stroke="#333" stroke-width="1.2" stroke-linecap="round" stroke-linejoin="round"><path d="M1.6 8 A8 8 0 0 1 16.4 5.4 M17.4 11 A8 8 0 0 1 2.6 13.6"/><path d="M17 1.6 V5.6 H13 M2 17.4 V13.4 H6"/></g></svg>
<span class="t" style="left:743.4px;top:873.0px;font-size:16px;letter-spacing:0.26px;color:#333;">| Page</span>
<div class="abs" style="left:799.4px;top:869.4px;width:26.8px;height:21.0px;border:1px solid #b9b9b9;border-radius:4px;background:#fff"></div>
<span class="t" style="left:808.6px;top:872.0px;font-size:15.5px;color:#333;">1</span>
<span class="t" style="left:832.0px;top:873.0px;font-size:16px;color:#333;">sur 1 |</span>
<span class="t" style="left:980.4px;top:873.0px;font-size:16px;color:#333;">|</span>
<span class="t" style="left:1701.3px;top:873.0px;font-size:16px;letter-spacing:0.56px;color:#333;">Page courante 1 - 5 sur 5</span>

<!--MENU-->
<div class="abs" style="left:1639.0px;top:158.0px;width:281.0px;height:172.0px;background:#fff;border-radius:13px;box-shadow:0 1px 6px rgba(60,60,100,.10)"></div>
<div class="abs" style="left:1650.0px;top:193.2px;width:258.8px;height:21.6px;background:#d6e0fb"></div>
<svg class="abs" style="left:1655.0px;top:174.4px;" width="17.4" height="16.6" viewBox="0 0 17.4 16.6"><g fill="none" stroke="#86b526" stroke-width="1.3" stroke-linejoin="round"><path d="M7.6 3 H3.4 A2.6 2.6 0 0 0 .8 5.6 V11 A2.6 2.6 0 0 0 3.4 13.6 H7.6"/><path d="M7.6 .8 H14 A2.6 2.6 0 0 1 16.6 3.4 V13.2 A2.6 2.6 0 0 1 14 15.8 H7.6 Z"/><path d="M3 6.4 L5.8 10.4 M5.8 6.4 L3 10.4 M11 5.4 H13.6 M11 8.3 H13.6 M11 11.2 H13.6" stroke-linecap="round"/></g></svg>
<span class="t" style="left:1682.6px;top:175.0px;font-size:12.8px;letter-spacing:0.25px;color:#3a3a3a;">Exporter les résultats</span>
<svg class="abs" style="left:1653.8px;top:197.0px;" width="17" height="17.6" viewBox="0 0 17 17.6"><g fill="none" stroke="#f0433a" stroke-width="1.3" stroke-linejoin="round" stroke-linecap="round"><rect x=".8" y=".8" width="15.4" height="16" rx="3.8"/><path d="M10.4 3.2 V5.4 A1.3 1.3 0 0 0 11.7 6.7 H14"/></g></svg>
<span class="t" style="left:1656.2px;top:206.0px;font-size:7px;font-weight:bold;color:#f0433a;font-family:&quot;Liberation Serif&quot;,serif;transform:scaleX(.98);transform-origin:0 100%;-webkit-text-stroke:.25px #f0433a;">PDF</span>
<span class="t" style="left:1681.6px;top:199.0px;font-size:12.8px;letter-spacing:0.25px;color:#3a3a3a;">Imprimer les résultats</span>
<svg class="abs" style="left:1655.4px;top:223.4px;" width="15.6" height="15.6" viewBox="0 0 15 15"><g fill="none" stroke="#f5c32a" stroke-width="1.5" stroke-linejoin="round"><path d="M1.2 13.8 L1.6 10.2 L9.2 2.2 A2.6 2.6 0 0 1 13 5.8 L5.2 13.6 Z"/><path d="M7.6 3.9 L11.3 7.5"/></g></svg>
<span class="t" style="left:1682.6px;top:224.0px;font-size:12.8px;letter-spacing:0.16px;color:#3a3a3a;">Modifier les données bibliographiques</span>
<svg class="abs" style="left:1653.8px;top:246.0px;" width="16.2" height="18" viewBox="0 0 15.5 18"><g fill="none" stroke="#333" stroke-width="1.5" stroke-linecap="round" stroke-linejoin="round"><path d="M.8 4.4 H14.7 M5.4 4.2 L6.2 1 H9.3 L10.1 4.2"/><path d="M2.5 4.6 L3.3 15 A2.2 2.2 0 0 0 5.5 17.2 H10 A2.2 2.2 0 0 0 12.2 15 L13 4.6"/><path d="M5.8 9 H9.7 M5.8 12.3 H9.7"/></g></svg>
<span class="t" style="left:1682.6px;top:248.0px;font-size:12.8px;letter-spacing:0.24px;color:#3a3a3a;">Supprimer les notices inutilisées</span>
<div class="abs" style="left:1650.2px;top:268.8px;width:258.4px;height:1.2px;background:#3a3a3a"></div>
<svg class="abs" style="left:1652.6px;top:274.6px;fill:#b7d58c" width="19.6" height="19.6" viewBox="0 0 24 24"><path d="M11 9h2V6h3V4h-3V1h-2v3H8v2h3v3zm-4 9c-1.1 0-1.99.9-1.990 2S5.900 22 7 22s2-.9 2-2-.9-2-2-2zm10 0c-1.100 0-1.990.9-1.990 2s.890 2 1.990 2 2-.9 2-2-.9-2-2-2zm-8.900-5h7.450c.750 0 1.410-.410 1.750-1.030l3.860-7.010L19.420 4l-3.870 7H8.530L4.270 2H1v2h2l3.600 7.590-1.350 2.440C4.520 15.370 5.480 17 7 17h12v-2H7l1.100-2z"/></svg>
<span class="t" style="left:1682.6px;top:278.0px;font-size:12.8px;letter-spacing:0.14px;color:#ababab;">Compléter le panier</span>
<svg class="abs" style="left:1653.0px;top:299.2px;fill:#fbd390" width="19.4" height="19.4" viewBox="0 0 24 24"><path d="M1.41 1.13L0 2.54l4.39 4.39 2.21 4.66-1.35 2.45c-.16.28-.25.61-.25.96 0 1.1.9 2 2 2h7.46l1.38 1.38c-.5.36-.83.95-.83 1.62 0 1.1.89 2 1.99 2 .67 0 1.26-.33 1.62-.84L21.46 24l1.41-1.41L1.41 1.13zM7 15l1.1-2h2.36l2 2H7zM20 4H7.12l2 2h9.19l-2.76 5h-1.44l1.94 1.94c.54-.14.99-.49 1.25-.97l3.58-6.49C21.25 4.82 20.76 4 20 4zM7 18c-1.1 0-1.99.9-1.99 2S5.9 22 7 22s2-.9 2-2-.9-2-2-2z"/></svg>
<span class="t" style="left:1682.6px;top:302.0px;font-size:12.8px;letter-spacing:0.13px;color:#ababab;">Retirer du panier</span>
<div class="abs" style="left:1621.4px;top:186.3px;width:247.6px;height:35.3px;border:2px solid #f00"></div>

</body>
</html>
